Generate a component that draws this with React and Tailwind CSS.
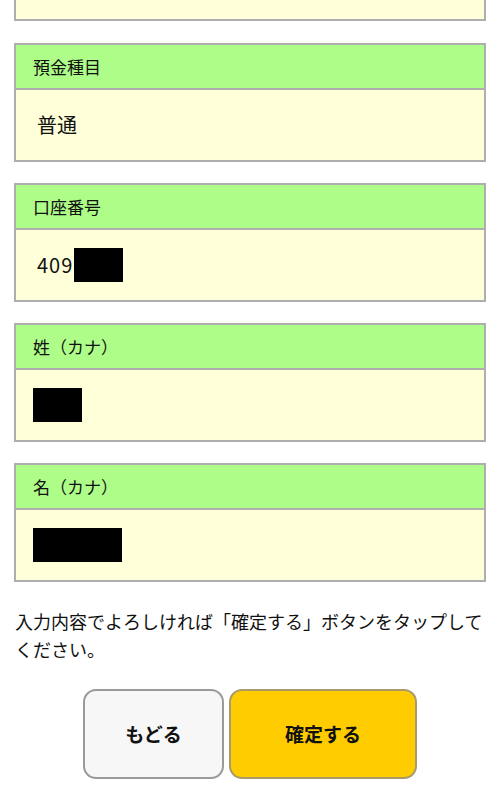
const fields = [
  { label: "預金種目", value: "普通" },
  { label: "口座番号", value: "409", mask: "w-[49px]" },
  { label: "姓（カナ）", mask: "w-[49px]" },
  { label: "名（カナ）", mask: "w-[89px]" },
];

const Field = ({ label, value, mask }) => (
  <div className="border-2 border-[#aeaeae] bg-[#ffffd9]">
    <div className="h-[45px] flex items-center px-[17px] bg-[#adfd88] border-b-2 border-[#aeaeae] text-[17px] text-[#111]">
      {label}
    </div>
    <div className="h-[70px] flex items-center px-[21px] text-[20px] text-[#111]">
      {value && <span className={mask ? "tracking-[1px]" : ""}>{value}</span>}
      {mask && (
        <span
          className={`inline-block h-[34px] bg-black ${mask} ${value ? "ml-[1px]" : "ml-[-4px]"}`}
        />
      )}
    </div>
  </div>
);

export default function App() {
  return (
    <div
      className="w-[500px] h-[807px] bg-white overflow-hidden"
      style={{ fontFamily: '"Noto Sans CJK JP", "Noto Sans", sans-serif' }}
    >
      <div className="px-[14px]">
        <div className="h-[21px] border-2 border-t-0 border-[#aeaeae] bg-[#ffffd9]" />
        <div className="mt-[22px] flex flex-col gap-[21px]">
          {fields.map((f) => (
            <Field key={f.label} {...f} />
          ))}
        </div>
        <p className="mt-[25px] ml-[1px] text-[18px] leading-[28px] text-[#111]">
          入力内容でよろしければ「確定する」ボタンをタップしてください。
        </p>
        <div className="mt-[26px] flex justify-center gap-[5px]">
          <button className="w-[141px] h-[90px] rounded-[13px] border-2 border-[#9a9a9a] bg-[#f7f7f7] text-[19px] font-bold text-[#111]">
            もどる
          </button>
          <button className="w-[188px] h-[90px] rounded-[13px] border-2 border-[#a89a6a] bg-[#ffcc00] text-[19px] font-bold text-[#111]">
            確定する
          </button>
        </div>
      </div>
    </div>
  );
}
